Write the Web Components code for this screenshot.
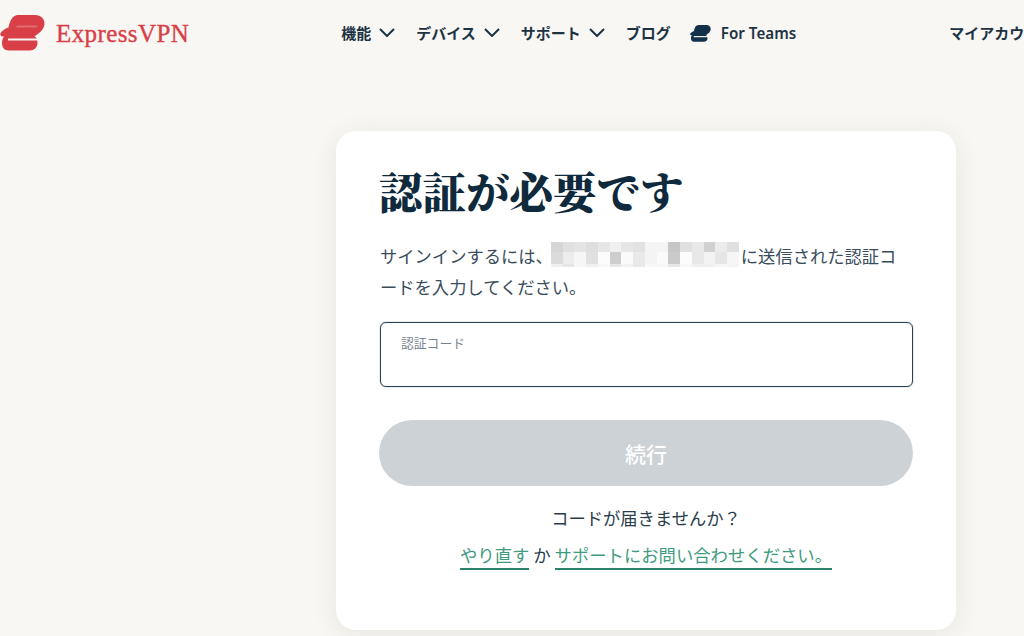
<!DOCTYPE html>
<html lang="ja">
<head>
<meta charset="utf-8">
<title>ExpressVPN</title>
<style>
  html, body { margin: 0; height: 100%; overflow: hidden; }
  body {
    background: #f8f7f3;
    color: #1d3344;
    font-family: "Noto Sans CJK JP", "Noto Sans", sans-serif;
  }
</style>
</head>
<body>
<site-header></site-header>
<auth-page>
  <auth-card>
    <span slot="title">認証が必要です</span>
    <span slot="text">サインインするには、<blur-mosaic></blur-mosaic>に送信された認証コ<br>ードを入力してください。</span>
    <code-field slot="field" label="認証コード"></code-field>
    <submit-button slot="button">続行</submit-button>
    <span slot="help">コードが届きませんか？</span>
    <span slot="links"><text-link>やり直す</text-link> か <text-link>サポートにお問い合わせください。</text-link></span>
  </auth-card>
</auth-page>

<script>
const LOGO_PATH =
  "M18 15H35C41 15 44.5 19 44.5 23.5C44.5 29 40 33 34 36.5H2.5C0.5 36.5 -0.5 34 1 32.5C3 30 5.5 28.5 8.5 27.5C10 20 13 15 18 15Z" +
  "M5 36H33C36 36 37.5 39.5 37.5 43C37.5 47.5 34 50.5 30 50.5H9C4 50.5 2 47 2 43C2 40 3 37 5 36Z";

class BrandLogo extends HTMLElement {
  constructor() {
    super();
    const shadow = this.attachShadow({ mode: "open" });
    shadow.innerHTML = `
      <style>
        :host { display: flex; align-items: center; gap: 11px; color: #d93f47; }
        svg { display: block; }
        span {
          font: 25px/1 "Liberation Serif", serif;
          letter-spacing: .4px;
          -webkit-text-stroke: .35px currentColor;
        }
      </style>
      <svg width="45" height="36" viewBox="0 15 45 36">
        <path fill="currentColor" d="${LOGO_PATH}"/>
        <path fill="#f8f7f3" fill-opacity=".25" d="M17 25.5H37.5C37.5 26.5 37 27 36.5 27.5H16Z"/>
        <path fill="#f8f7f3" d="M8 38.5H38V40.5H8Z"/>
      </svg>
      <span>ExpressVPN</span>`;
  }
}
customElements.define("brand-logo", BrandLogo);

class NavItem extends HTMLElement {
  constructor() {
    super();
    const shadow = this.attachShadow({ mode: "open" });
    const arrow = this.hasAttribute("menu")
      ? `<svg width="16" height="9" viewBox="0 0 16 9"><path d="M1 1l7 7 7-7" fill="none" stroke="currentColor" stroke-width="2"/></svg>`
      : "";
    shadow.innerHTML = `
      <style>
        :host {
          display: flex; align-items: center; gap: 8px;
          font-size: 15px; font-weight: 700; color: #1d3344; white-space: nowrap;
        }
        svg { display: block; }
      </style>
      <slot></slot>${arrow}`;
  }
}
customElements.define("nav-item", NavItem);

class SiteHeader extends HTMLElement {
  constructor() {
    super();
    const shadow = this.attachShadow({ mode: "open" });
    shadow.innerHTML = `
      <style>
        :host { display: flex; align-items: center; height: 66px; white-space: nowrap; }
        nav { display: flex; align-items: center; gap: 21px; margin: -2px 0 0 152px; }
        .teams { display: flex; align-items: center; gap: 10px; margin: 2px 0 0 -2px; }
        .teams span { font: 600 15.2px "Noto Sans", sans-serif; }
        .account { margin: -2px 0 0 153px; }
      </style>
      <brand-logo></brand-logo>
      <nav>
        <nav-item menu>機能</nav-item>
        <nav-item menu>デバイス</nav-item>
        <nav-item menu>サポート</nav-item>
        <nav-item>ブログ</nav-item>
        <nav-item class="teams">
          <svg width="21" height="17" viewBox="0 15 45 36">
            <path fill="#12304a" d="${LOGO_PATH}"/>
            <path fill="#f8f7f3" d="M8 38.5H38V41H8Z"/>
          </svg>
          <span>For Teams</span>
        </nav-item>
      </nav>
      <nav-item class="account">マイアカウント</nav-item>`;
  }
}
customElements.define("site-header", SiteHeader);

class AuthPage extends HTMLElement {
  constructor() {
    super();
    const shadow = this.attachShadow({ mode: "open" });
    shadow.innerHTML = `
      <style>
        :host { display: block; padding: 65px 0 0 336px; }
      </style>
      <slot></slot>`;
  }
}
customElements.define("auth-page", AuthPage);

class AuthCard extends HTMLElement {
  constructor() {
    super();
    const shadow = this.attachShadow({ mode: "open" });
    shadow.innerHTML = `
      <style>
        :host {
          display: block; box-sizing: border-box;
          width: 620px; height: 499px;
          padding: 24px 43px 0 43px;
          background: #fff;
          border-radius: 20px;
          box-shadow: 0 4px 26px rgba(60, 60, 40, .09);
        }
        h1 {
          margin: 0 0 15px;
          font: 900 43.5px/70px "Noto Serif CJK JP", "Noto Sans CJK JP", serif;
          color: #0f2a3d;
        }
        .text { padding-left: 1px; font-size: 17.3px; line-height: 31px; color: #3a4d5c; height: 62px; }
        .field { margin-top: 20px; }
        .button { margin-top: 33px; }
        .help { margin-top: 18px; text-align: center; font-size: 17.3px; line-height: 28px; color: #2a3d4c; }
        .links { margin-top: 9px; text-align: center; font-size: 17.35px; line-height: 28px; color: #2a3d4c; }
      </style>
      <h1><slot name="title"></slot></h1>
      <div class="text"><slot name="text"></slot></div>
      <div class="field"><slot name="field"></slot></div>
      <div class="button"><slot name="button"></slot></div>
      <div class="help"><slot name="help"></slot></div>
      <div class="links"><slot name="links"></slot></div>`;
  }
}
customElements.define("auth-card", AuthCard);

class BlurMosaic extends HTMLElement {
  constructor() {
    super();
    const shadow = this.attachShadow({ mode: "open" });
    const rows = [
      "d6e0e4dee6f0e6e2f4f4c6e0e8d0ece0",
      "dbecf6e0fccdfae9f4facafce8f3e6f6",
      "f0e6f6f0f8e6f2e8f8f6e6f8f0f0f6f4",
    ];
    let cells = "";
    rows.forEach((r) => {
      for (let i = 0; i < 16; i++) {
        const v = r.substr(i * 2, 2);
        cells += `<i style="background:#${v}${v}${v}"></i>`;
      }
    });
    shadow.innerHTML = `
      <style>
        :host {
          display: inline-block; width: 188px; height: 25px;
          overflow: hidden;
          margin: 0 2px 0 -2px;
          vertical-align: -4px;
          filter: blur(.4px);
        }
        div {
          display: grid;
          grid-template-columns: repeat(16, 11.75px);
          grid-template-rows: 10px 12px 3px;
        }
      </style>
      <div>${cells}</div>`;
  }
}
customElements.define("blur-mosaic", BlurMosaic);

class CodeField extends HTMLElement {
  constructor() {
    super();
    const shadow = this.attachShadow({ mode: "open" });
    shadow.innerHTML = `
      <style>
        :host {
          display: block; box-sizing: border-box; height: 65px;
          padding: 12px 21px 0;
          border: 1px solid #2b4254; border-radius: 6px;
          box-shadow: 0 0 1px #2b4254;
          margin: 0 0 0 1px;
        }
        label { display: block; margin-left: -1px; font-size: 12.8px; line-height: 16px; color: #77848e; }
      </style>
      <label></label>`;
    shadow.querySelector("label").textContent = this.getAttribute("label") || "";
  }
}
customElements.define("code-field", CodeField);

class SubmitButton extends HTMLElement {
  constructor() {
    super();
    const shadow = this.attachShadow({ mode: "open" });
    shadow.innerHTML = `
      <style>
        :host {
          display: flex; align-items: center; justify-content: center;
          height: 66px; border-radius: 33px;
          background: #cdd2d6; color: #fff;
          font-size: 21px; font-weight: 500;
        }
      </style>
      <slot></slot>`;
  }
}
customElements.define("submit-button", SubmitButton);

class TextLink extends HTMLElement {
  constructor() {
    super();
    const shadow = this.attachShadow({ mode: "open" });
    shadow.innerHTML = `
      <style>
        :host {
          display: inline-block; color: #3f9a80; line-height: 26px;
          border-bottom: 2px solid #2a8268;
        }
      </style>
      <slot></slot>`;
  }
}
customElements.define("text-link", TextLink);
</script>
</body>
</html>
